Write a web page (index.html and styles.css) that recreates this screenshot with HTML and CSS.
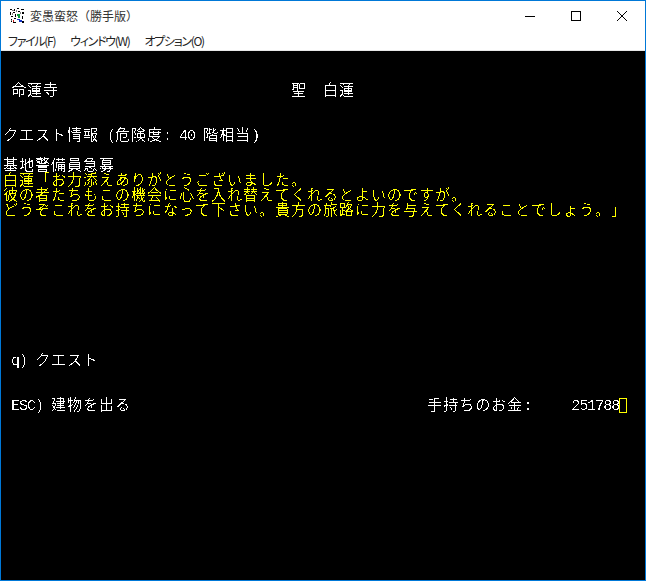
FILE: index.html
```html
<!DOCTYPE html>
<html lang="ja">
<head>
<meta charset="utf-8">
<title>変愚蛮怒（勝手版）</title>
<link rel="stylesheet" href="styles.css">
</head>
<body>
<svg class="defs" width="0" height="0" aria-hidden="true">
  <filter id="crisp" color-interpolation-filters="sRGB" x="-5%" y="-20%" width="110%" height="140%">
    <feComponentTransfer>
      <feFuncA type="discrete" tableValues="0 0 0 1 1 1 1"/>
    </feComponentTransfer>
  </filter>
  <filter id="thin" color-interpolation-filters="sRGB" x="-5%" y="-20%" width="110%" height="140%">
    <feComponentTransfer>
      <feFuncA type="discrete" tableValues="0 0 0 0 0 1 1 1"/>
    </feComponentTransfer>
  </filter>
</svg>
<div class="window">
  <header class="titlebar">
    <svg class="appicon" width="16" height="16" viewBox="0 0 16 16" shape-rendering="crispEdges">
      <path fill="#000" d="M1 1h2v1H1zM5 1h1v2H5zM8 0h2v1H8zM12 1h3v1h-3zM1 4h1v3H1zM4 4h2v1H4zM9 3h2v1H9zM13 4h2v2h-2zM2 8h2v1H2zM6 6h1v3H6zM13 8h1v3h-1zM2 11h1v3H2zM5 10h2v1H5zM4 14h3v1H4zM13 13h2v2h-2z"/>
      <path fill="#808080" d="M3 2h2v1H3zM7 2h1v2H7zM3 5h1v2H3zM11 4h1v2h-1zM2 12h1v1H2zM12 12h1v1h-1z"/>
      <path fill="#0a9a3c" d="M8 6h3v2H8zM9 8h2v2H9z"/>
      <path fill="#1030c8" d="M8 11h3v1H8zM10 12h3v2h-3z"/>
      <path fill="#c81818" d="M4 12h1v2H4z"/>
    </svg>
    <span class="title">変愚蛮怒（勝手版）</span>
    <div class="controls">
      <svg class="ctl" width="46" height="30" viewBox="0 0 46 30" shape-rendering="crispEdges"><path d="M18 15h10v1H18z" fill="#000"/></svg>
      <svg class="ctl" width="46" height="30" viewBox="0 0 46 30" shape-rendering="crispEdges"><path d="M18.500 10.500h9v9h-9z" fill="none" stroke="#000"/></svg>
      <svg class="ctl" width="46" height="30" viewBox="0 0 46 30"><path d="M18 10l10 10M28 10L18 20" fill="none" stroke="#000"/></svg>
    </div>
  </header>
  <nav class="menubar">
    <span>ファイル(F)</span>
    <span>ウィンドウ(W)</span>
    <span>オプション(O)</span>
  </nav>
  <main class="term">
    <pre class="row"></pre>
    <pre class="row"></pre>
    <pre class="row"> <b>命蓮寺</b>                             <b>聖</b>  <b>白蓮</b></pre>
    <pre class="row"></pre>
    <pre class="row"></pre>
    <pre class="row"><b>クエスト情報</b> <u>(</u><b>危険度</b><u>:</u> <u>40</u> <b>階相当</b><u>)</u></pre>
    <pre class="row"></pre>
    <pre class="row"><b>基地警備員急募</b></pre>
    <pre class="row y"><b>白蓮「お力添えありがとうございました。</b></pre>
    <pre class="row y"><b>彼の者たちもこの機会に心を入れ替えてくれるとよいのですが。</b></pre>
    <pre class="row y"><b>どうぞこれをお持ちになって下さい。貴方の旅路に力を与えてくれることでしょう。」</b></pre>
    <pre class="row"></pre>
    <pre class="row"></pre>
    <pre class="row"></pre>
    <pre class="row"></pre>
    <pre class="row"></pre>
    <pre class="row"></pre>
    <pre class="row"></pre>
    <pre class="row"></pre>
    <pre class="row"></pre>
    <pre class="row"> <u>q)</u> <b>クエスト</b></pre>
    <pre class="row"></pre>
    <pre class="row"></pre>
    <pre class="row"> <u>ESC)</u> <b>建物を出る</b>                                     <b>手持ちのお金</b><u>:</u>     <u>251788</u><i class="cursor"></i></pre>
  </main>
</div>
</body>
</html>
```
FILE: styles.css
```css
html, body {
  margin: 0;
  height: 100%;
  background: #fff;
}
.defs {
  display: block;
  height: 0;
}
.window {
  box-sizing: border-box;
  width: 646px;
  height: 581px;
  display: flex;
  flex-direction: column;
  border: 1px solid #0078d7;
  font-family: "Noto Sans CJK JP", sans-serif;
}
.titlebar {
  height: 29px;
  display: flex;
  align-items: center;
  background: #fff;
}
.appicon {
  margin-left: 8px;
  margin-right: 5px;
}
.title {
  font-size: 12px;
  color: #333;
}
.controls {
  margin-left: auto;
  display: flex;
}
.ctl {
  display: block;
}
.menubar {
  height: 20px;
  display: flex;
  align-items: center;
  gap: 15px;
  padding-left: 7px;
  font-size: 12px;
  font-feature-settings: "palt";
  letter-spacing: -1.3px;
  color: #222;
  background: #fff;
  border-bottom: 1px solid #e8e8e8;
}
.term {
  flex: 1;
  background: #000;
  padding-left: 2px;
}
.row {
  margin: 0;
  height: 15px;
  line-height: 15px;
  white-space: pre;
  font-family: "Liberation Mono", monospace;
  font-size: 15px;
  letter-spacing: -1px;
  color: #fff;
  font-kerning: none;
  text-spacing-trim: space-all;
}
.row.y {
  color: #ff0;
}
.row b {
  font-family: "Noto Sans CJK JP", sans-serif;
  font-size: 15px;
  font-weight: 300;
  letter-spacing: 1px;
  filter: url(#crisp);
}
.row u {
  text-decoration: none;
  filter: url(#thin);
}
.cursor {
  display: inline-block;
  position: relative;
  top: 2px;
  box-sizing: border-box;
  width: 8px;
  height: 15px;
  border: 1px solid #ff0;
  vertical-align: top;
}
```
